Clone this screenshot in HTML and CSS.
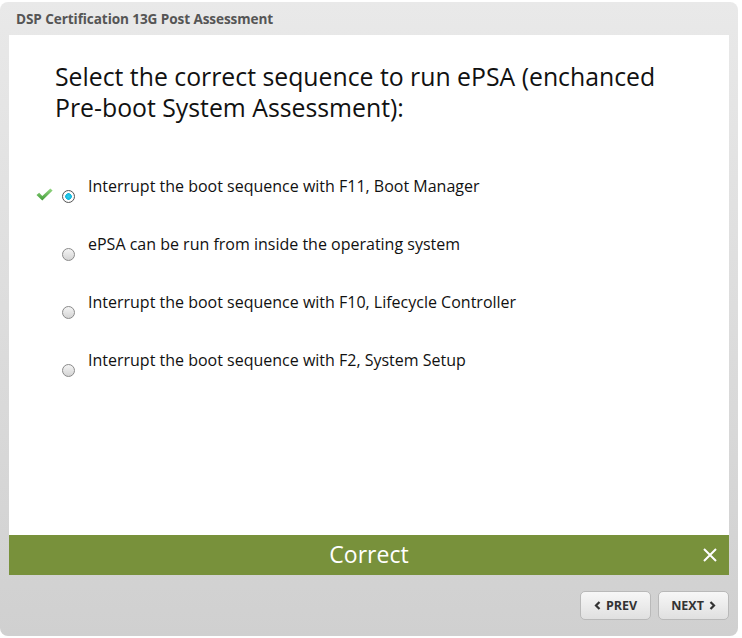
FILE: index.html
```html
<!DOCTYPE html>
<html lang="en">
<head>
    <meta charset="UTF-8">
    <title>DSP Certification 13G Post Assessment</title>
    <meta name="viewport" content="width=device-width, initial-scale=1.0">
    <link rel="stylesheet" href="styles.css">
</head>
<body>

    <div class="frame">
        <div class="header">DSP Certification 13G Post Assessment</div>

        <div class="content">
            <h1>Select the correct sequence to run ePSA (enchanced Pre-boot System Assessment):</h1>

            <div class="options">
                <label class="option correct">
                    <svg class="check" width="17" height="13" viewBox="0 0 17 13">
                        <defs>
                            <linearGradient id="chk" x1="0" y1="0" x2="0" y2="1">
                                <stop offset="0" stop-color="#96d884"/>
                                <stop offset="1" stop-color="#3f9a35"/>
                            </linearGradient>
                        </defs>
                        <path d="M0.5 7 L3.2 4.8 L6.3 8 L14.3 0.5 L16.6 2.6 L6.3 12.5 Z" fill="url(#chk)"/>
                    </svg>
                    <input type="radio" name="answer" checked>
                    <span class="radio"></span>
                    <span class="text">Interrupt the boot sequence with F11, Boot Manager</span>
                </label>
                <label class="option">
                    <input type="radio" name="answer">
                    <span class="radio"></span>
                    <span class="text">ePSA can be run from inside the operating system</span>
                </label>
                <label class="option">
                    <input type="radio" name="answer">
                    <span class="radio"></span>
                    <span class="text">Interrupt the boot sequence with F10, Lifecycle Controller</span>
                </label>
                <label class="option">
                    <input type="radio" name="answer">
                    <span class="radio"></span>
                    <span class="text">Interrupt the boot sequence with F2, System Setup</span>
                </label>
            </div>
        </div>

        <div class="feedback">
            <span>Correct</span>
            <svg class="close" width="14" height="14" viewBox="0 0 14 14">
                <path d="M1 1 L13 13 M13 1 L1 13" stroke="#fff" stroke-width="2"/>
            </svg>
        </div>

        <div class="footer">
            <button class="nav">
                <svg width="7" height="9" viewBox="0 0 7 9"><path d="M5.5 1 L2 4.5 L5.5 8" fill="none" stroke="#333" stroke-width="2.2"/></svg>
                PREV
            </button>
            <button class="nav">
                NEXT
                <svg width="7" height="9" viewBox="0 0 7 9"><path d="M1.5 1 L5 4.5 L1.5 8" fill="none" stroke="#333" stroke-width="2.2"/></svg>
            </button>
        </div>
    </div>

</body>
</html>
```

FILE: styles.css
```css
body {
    font-family: "Open Sans", "Noto Sans", sans-serif;
    margin: 0;
    padding: 0;
    background: #fff;
    color: #111;
}
.frame {
    width: 738px;
    height: 634px;
    margin-top: 2px;
    border-radius: 8px;
    background: linear-gradient(to bottom, #e9e9e9, #d0d0d0);
    display: flex;
    flex-direction: column;
    padding: 0 9px;
    box-sizing: border-box;
}
.header {
    height: 33px;
    line-height: 33px;
    padding-left: 7px;
    font-size: 13.6px;
    font-weight: bold;
    color: #555;
    letter-spacing: -0.1px;
}
.content {
    height: 500px;
    background: #fff;
    padding: 26px 0 0 46px;
    box-sizing: border-box;
}
h1 {
    margin: 0;
    width: 620px;
    font-size: 24.8px;
    font-weight: normal;
    line-height: 31px;
    color: #111;
}

/* answer rows */
.options {
    margin-top: 53px;
}
.option {
    position: relative;
    display: flex;
    align-items: flex-start;
    height: 58px;
    cursor: pointer;
}
.option input {
    display: none;
}
.option .radio {
    width: 11px;
    height: 11px;
    margin: 14px 13px 0 7px;
    border-radius: 50%;
    border: 1px solid #8a8a8a;
    background: linear-gradient(to bottom, #f4f4f4, #d4d4d4);
    flex-shrink: 0;
}
.option input:checked + .radio {
    border-color: #555;
    background: radial-gradient(circle, #2fd0ee 0, #14b8de 3px, #fff 3.6px, #f0f0f0 100%);
}
.option .text {
    font-size: 16px;
    line-height: 20px;
    color: #111;
}
.check {
    position: absolute;
    left: -19px;
    top: 12px;
}
.feedback {
    position: relative;
    height: 40px;
    background: #78913b;
    color: #fff;
    font-size: 23px;
    line-height: 38px;
    text-align: center;
}
.close {
    position: absolute;
    right: 12px;
    top: 13px;
}
.footer {
    display: flex;
    justify-content: flex-end;
    gap: 7px;
    padding-top: 16px;
}
.nav {
    width: 71px;
    height: 29px;
    border: 1px solid #b9b9b9;
    border-radius: 5px;
    background: linear-gradient(to bottom, #f7f7f7, #e0e0e0);
    font-family: "Open Sans", sans-serif;
    font-size: 12.5px;
    font-weight: bold;
    color: #333;
    cursor: pointer;
    padding: 0;
    display: flex;
    align-items: center;
    justify-content: center;
    gap: 5px;
}
```
